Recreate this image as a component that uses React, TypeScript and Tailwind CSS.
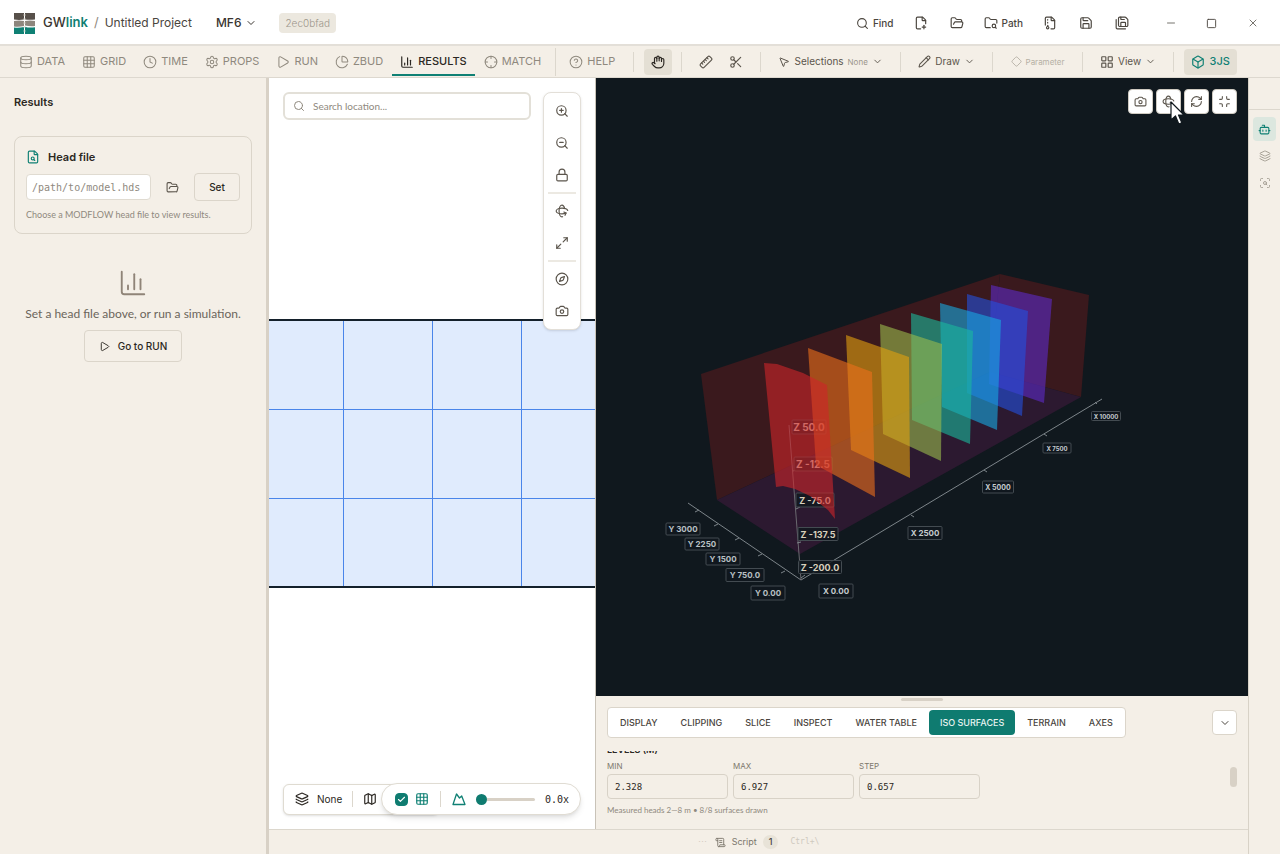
import type { ReactNode } from 'react'
import clsx from 'clsx'
import {
  BarChart3,
  Bot,
  Box,
  Camera,
  Check,
  ChevronDown,
  Clock,
  Compass,
  Crosshair,
  Database,
  Diamond,
  FileArchive,
  FileSearch,
  FolderOpen,
  FolderSearch,
  Grid3x3,
  Hand,
  HelpCircle,
  Layers,
  LayoutGrid,
  Lock,
  Map as MapIcon,
  Maximize2,
  Minimize,
  Minus,
  MousePointer2,
  Pencil,
  PieChart,
  Play,
  RefreshCw,
  Rotate3d,
  Ruler,
  Save,
  SaveAll,
  ScanSearch,
  Scissors,
  ScrollText,
  Search,
  Settings,
  Square,
  X,
  ZoomIn,
  ZoomOut,
  type LucideIcon,
} from 'lucide-react'

interface NavItem {
  label: string
  icon: LucideIcon
}

const navItems: NavItem[] = [
  { label: 'DATA', icon: Database },
  { label: 'GRID', icon: Grid3x3 },
  { label: 'TIME', icon: Clock },
  { label: 'PROPS', icon: Settings },
  { label: 'RUN', icon: Play },
  { label: 'ZBUD', icon: PieChart },
  { label: 'RESULTS', icon: BarChart3 },
  { label: 'MATCH', icon: Crosshair },
]

const tabs = ['DISPLAY', 'CLIPPING', 'SLICE', 'INSPECT', 'WATER TABLE', 'ISO SURFACES', 'TERRAIN', 'AXES']

// Iso surfaces, far to near
const surfaces = [
  { fill: '#5d2ac8', points: '991,285 1052,299 1044,403 989,384' },
  { fill: '#2350df', points: '967,294 1028,311 1022,416 967,393' },
  { fill: '#17a8e1', points: '940,303 1001,320 997,430 942,407' },
  { fill: '#1bb99d', points: '911,313 973,331 970,444 912,420' },
  { fill: '#9bbb4d', points: '880,324 942,344 941,461 883,434' },
  { fill: '#e3a00f', points: '846,335 909,357 910,478 851,450' },
  { fill: '#ec701a', points: '808,348 872,372 875,497 816,465' },
  { fill: '#cf252a', points: '764,363 777,364 803,373 827,385 835,519 828,510 810,496 795,489 783,486 776,487' },
]

interface AxisLabelProps {
  text: string
  x: number
  y: number
  w: number
  h: number
  size: number
  color: string
}

const zLabels: AxisLabelProps[] = [
  { text: 'Z 50.0', x: 809, y: 427, w: 34, h: 14, size: 10, color: '#d8d0bd' },
  { text: 'Z -12.5', x: 813, y: 464, w: 38, h: 14, size: 10, color: '#d8d0bd' },
  { text: 'Z -75.0', x: 815, y: 500, w: 38, h: 14, size: 9, color: '#d8d0bd' },
  { text: 'Z -137.5', x: 818, y: 534, w: 40, h: 13, size: 9, color: '#d8d0bd' },
  { text: 'Z -200.0', x: 820, y: 567, w: 43, h: 13, size: 9, color: '#d8d0bd' },
]

const floorLabels: AxisLabelProps[] = [
  { text: 'Y 3000', x: 683, y: 529, w: 34, h: 12, size: 8, color: '#b9c0c4' },
  { text: 'Y 2250', x: 702, y: 544, w: 34, h: 12, size: 8, color: '#b9c0c4' },
  { text: 'Y 1500', x: 723, y: 559, w: 34, h: 12, size: 8, color: '#b9c0c4' },
  { text: 'Y 750.0', x: 745, y: 575, w: 38, h: 13, size: 8, color: '#b9c0c4' },
  { text: 'Y 0.00', x: 768, y: 593, w: 34, h: 14, size: 8, color: '#b9c0c4' },
  { text: 'X 0.00', x: 836, y: 591, w: 34, h: 14, size: 8, color: '#c5cbce' },
  { text: 'X 2500', x: 925, y: 533, w: 34, h: 13, size: 8, color: '#c5cbce' },
  { text: 'X 5000', x: 998, y: 487, w: 31, h: 12, size: 7, color: '#c5cbce' },
  { text: 'X 7500', x: 1057, y: 448, w: 28, h: 10, size: 6, color: '#c5cbce' },
  { text: 'X 10000', x: 1106, y: 416, w: 29, h: 9, size: 6, color: '#c5cbce' },
]

function AxisLabel({ text, x, y, w, h, size, color }: AxisLabelProps) {
  return (
    <g>
      <rect x={x - w / 2} y={y - h / 2} width={w} height={h} rx="1" fill="#10181e" fillOpacity="0.8" stroke="#434b51" />
      <text x={x} y={y} fontSize={size} fontWeight="700" fill={color} textAnchor="middle" dominantBaseline="central">
        {text}
      </text>
    </g>
  )
}

function Scene() {
  return (
    <svg viewBox="596 78 652 618" className="block h-full w-full" role="img" aria-label="Iso surfaces">
      <polygon points="701,374 1000,274 990,372 717,500" fill="#3a191d" />
      <polygon points="1000,274 1089,295 1081,397 990,372" fill="#3a191d" />
      <polygon points="717,500 990,372 1081,397 800,554" fill="#2c1930" />
      <g stroke="#7d858a" strokeWidth="1" fill="none">
        <path d="M688 503 801 580 1102 399" />
        <path d="M801 580 789 425" stroke="#6b6a70" />
        <path d="M695 512l4-2M714 526l4-2M735 540l4-2M758 556l4-2M781 573l4-2M801 578l4-3" />
        <path d="M911 515l3 2M984 470l3 2M1044 434l3 2M1095 402l2 2" />
        <path d="M796 509l4-2M797 543l4-1M793 471l3-1" />
      </g>
      {zLabels.map((label) => (
        <AxisLabel key={label.text} {...label} />
      ))}
      {surfaces.map((surface) => (
        <polygon key={surface.fill} points={surface.points} fill={surface.fill} fillOpacity="0.6" />
      ))}
      {floorLabels.map((label) => (
        <AxisLabel key={label.text} {...label} />
      ))}
    </svg>
  )
}

function MapGrid() {
  return (
    <svg viewBox="269 78 326 751" preserveAspectRatio="xMidYMid slice" className="block h-full w-full" aria-hidden="true">
      <rect x="0" y="320" width="900" height="267" fill="#e0ebfd" />
      <path
        d="M0 409H900M0 498H900M343.5 320V587M432.5 320V587M521.5 320V587"
        stroke="#4a85ea"
        strokeWidth="1"
        shapeRendering="crispEdges"
      />
      <path d="M0 320H900M0 587H900" stroke="#14202b" strokeWidth="2" />
    </svg>
  )
}

function Logo() {
  return (
    <svg width="21" height="21" viewBox="0 0 21 21" className="shrink-0" aria-hidden="true">
      <path d="M0 0h10v6.500q-5 .8-10 0z" fill="#57504a" />
      <path d="M11 0h10v6.500q-5 .6-10 0z" fill="#57504a" />
      <path d="M0 8q5-.8 10 0v5q-5 1-10 .4z" fill="#8d867d" />
      <path d="M11 8q5-.8 10 0v5q-5 .6-10-.6z" fill="#8d867d" />
      <path d="M0 14.500q5 .6 10-.5V21H0z" fill="#0f8074" />
      <path d="M11 13.700q4 1.400 10 .6V21H11z" fill="#0f8074" />
      <path d="M10.500 1v20" stroke="#e6e2da" strokeWidth="1.500" strokeDasharray="2 2" />
    </svg>
  )
}

function FilePlusIcon() {
  return (
    <svg width="14" height="14" viewBox="0 0 24 24" fill="none" stroke="currentColor" strokeWidth="2" strokeLinecap="round" strokeLinejoin="round" aria-hidden="true">
      <path d="M11.350 22H6a2 2 0 0 1-2-2V4a2 2 0 0 1 2-2h8a2.400 2.400 0 0 1 1.706.706l3.588 3.588A2.400 2.400 0 0 1 20 8v5.350" />
      <path d="M14 2v5a1 1 0 0 0 1 1h5" />
      <path d="M14 19h6" />
      <path d="M17 16v6" />
    </svg>
  )
}

function TerrainIcon() {
  return (
    <svg width="14" height="14" viewBox="0 0 14 14" fill="none" stroke="currentColor" strokeWidth="1.300" strokeLinejoin="round" className="shrink-0" aria-hidden="true">
      <path d="M1 12.500 4.500 2l3 4 2.200-2L13 12.500z" />
    </svg>
  )
}

function IconButton({ label, className, children }: { label: string; className?: string; children: ReactNode }) {
  return (
    <button type="button" aria-label={label} className={clsx('flex shrink-0 items-center justify-center', className)}>
      {children}
    </button>
  )
}

function Header() {
  return (
    <header className="flex h-[46px] shrink-0 items-center border-b-2 border-[#e3dfd8] bg-white pt-[2px] pr-[7px] pl-[14px] text-[#4a453e]">
      <Logo />
      <div className="ml-2 flex items-center text-[12px]">
        <span className="text-[13px] font-medium text-[#3a352f]">
          GW<span className="font-semibold text-[#0f8074]">link</span>
        </span>
        <span className="mx-[6px] text-[13px] text-[#8f897e]">/</span>
        <span>Untitled Project</span>
      </div>
      <button type="button" className="ml-6 flex items-center gap-1 text-[12px] font-medium text-[#3a352f]">
        MF6
        <ChevronDown size={12} />
      </button>
      <span className="ml-[22px] rounded-sm bg-[#ece8df] px-[6px] py-[2px] text-[10px] leading-[16px] font-light text-[#9c968b]">2ec0bfad</span>

      <div className="ml-auto flex items-center text-[10px]">
        <button type="button" className="flex items-center gap-1 px-[9px] font-medium">
          <Search size={13} />
          Find
        </button>
        <IconButton label="New file" className="h-8 w-9"><FilePlusIcon /></IconButton>
        <IconButton label="Open folder" className="h-8 w-9"><FolderOpen size={14} /></IconButton>
        <button type="button" className="flex items-center gap-1 px-[9px] font-medium">
          <FolderSearch size={14} />
          Path
        </button>
        <IconButton label="Archive" className="h-8 w-9"><FileArchive size={14} /></IconButton>
        <IconButton label="Save" className="h-8 w-9"><Save size={14} /></IconButton>
        <IconButton label="Save all" className="h-8 w-9"><SaveAll size={14} /></IconButton>
        <div className="ml-[10px] flex">
          <IconButton label="Minimize" className="h-8 w-[41px]"><Minus size={12} strokeWidth={1.5} /></IconButton>
          <IconButton label="Maximize" className="h-8 w-[41px]"><Square size={11} /></IconButton>
          <IconButton label="Close" className="h-8 w-[41px]"><X size={12} strokeWidth={1.5} /></IconButton>
        </div>
      </div>
    </header>
  )
}

function Separator() {
  return <span className="h-5 w-px shrink-0 bg-[#dcd7cd]" />
}

function NavBar() {
  return (
    <nav className="flex h-8 shrink-0 items-center border-b border-[#ddd8cf] pr-[43px] pl-[11px] text-[#8f897e]">
      <div className="flex shrink-0 gap-px">
        {navItems.map(({ label, icon: Icon }) => {
          const active = label === 'RESULTS'
          return (
            <button
              key={label}
              type="button"
              className={clsx(
                'flex h-7 items-center gap-1 border-b-2 px-2 pt-[2px] text-[11px]',
                active ? 'border-[#0f8074] font-medium text-[#2b2722]' : 'border-transparent'
              )}
            >
              <Icon size={14} strokeWidth={active ? 2 : 1.75} />
              {label}
            </button>
          )
        })}
      </div>
      <span className="ml-[6px] h-7 w-px shrink-0 bg-[#dcd7cd]" />
      <button type="button" className="flex shrink-0 items-center gap-1 pl-[13px] text-[11px]">
        <HelpCircle size={14} strokeWidth={1.75} />
        HELP
      </button>

      {/* Tools */}
      <div className="ml-[18px] flex min-w-0 flex-1 items-center justify-between text-[10px] text-[#5b554c]">
        <Separator />
        <IconButton label="Pan" className="h-[26px] w-7 rounded bg-[#e4dfd4] text-[#2b2722]"><Hand size={14} /></IconButton>
        <Separator />
        <div className="flex items-center">
          <IconButton label="Measure" className="h-6 w-[30px]"><Ruler size={14} className="-scale-x-100" /></IconButton>
          <IconButton label="Cut" className="h-6 w-[30px]"><Scissors size={14} /></IconButton>
        </div>
        <Separator />
        <button type="button" className="flex items-center gap-1 px-2">
          <MousePointer2 size={12} />
          Selections <span className="text-[8px] text-[#9c968b]">None</span>
          <ChevronDown size={11} />
        </button>
        <Separator />
        <button type="button" className="flex items-center gap-1 px-2">
          <Pencil size={13} />
          Draw
          <ChevronDown size={11} />
        </button>
        <Separator />
        <button type="button" disabled className="flex items-center gap-1 px-2 text-[8px] text-[#b5afa4]">
          <Diamond size={11} />
          Parameter
        </button>
        <Separator />
        <button type="button" className="flex items-center gap-1 px-2">
          <LayoutGrid size={14} />
          View
          <ChevronDown size={11} />
        </button>
        <Separator />
        <button type="button" className="flex h-[26px] items-center gap-[5px] rounded bg-[#e4dfd4] px-[7px] text-[11px] font-medium text-[#0f8074]">
          <Box size={14} />
          3JS
        </button>
      </div>
    </nav>
  )
}

function ResultsPanel() {
  return (
    <aside className="w-[269px] shrink-0 border-r-[3px] border-[#d8d1c6] px-[14px] text-[#2b2722]">
      <h1 className="pt-4 text-[11px] leading-4 font-semibold">Results</h1>
      <section className="mt-[26px] rounded-lg border border-[#dbd5ca] px-[11px] pt-3 pb-[11px]">
        <h2 className="flex items-center gap-2 text-[11px] leading-4 font-semibold">
          <FileSearch size={14} className="text-[#0f8074]" />
          Head file
        </h2>
        <div className="mt-2 flex items-center">
          <input
            aria-label="Head file path"
            placeholder="/path/to/model.hds"
            className="h-[26px] min-w-0 flex-1 rounded-sm border border-[#e0dbd1] bg-white px-[5px] font-['DejaVu_Sans_Mono',monospace] text-[10px] placeholder:text-[#8f897e]"
          />
          <IconButton label="Browse" className="h-7 w-[43px] text-[#5b554c]"><FolderOpen size={13} /></IconButton>
          <button type="button" className="h-7 w-[46px] rounded border border-[#dbd5ca] text-[10px] font-medium">Set</button>
        </div>
        <p className="mt-[7px] font-['Lato',sans-serif] text-[9px] leading-[14px] text-[#8f897e]">Choose a MODFLOW head file to view results.</p>
      </section>

      <div className="mt-[34px] flex flex-col items-center">
        <BarChart3 size={30} strokeWidth={1.5} className="text-[#8f8478]" />
        <p className="mt-2 font-['Lato',sans-serif] text-[12px] leading-4 whitespace-nowrap text-[#6b655b]">Set a head file above, or run a simulation.</p>
        <button type="button" className="mt-2 flex h-8 items-center gap-2 rounded border border-[#dbd5ca] px-[14px] text-[10px] font-medium">
          <Play size={11} />
          Go to RUN
        </button>
      </div>
    </aside>
  )
}

function MapView() {
  return (
    <section className="relative min-w-0 flex-1 overflow-hidden bg-white">
      <div className="absolute inset-0">
        <MapGrid />
      </div>
      <div className="absolute inset-x-[14px] top-[14px] flex items-start gap-3 text-[#5b554c]">
        <label className="flex h-7 min-w-0 flex-1 items-center gap-2 rounded-md border-2 border-[#e3e0d8] bg-white px-2">
          <Search size={12} className="shrink-0 text-[#8f897e]" />
          <input
            aria-label="Search location"
            placeholder="Search location..."
            className="w-full min-w-0 font-['Lato',sans-serif] text-[10px] outline-none placeholder:text-[#8f897e]"
          />
        </label>
        <div className="flex w-[38px] flex-col items-center rounded-lg border border-[#e3dfd8] bg-white py-[2px] shadow-sm">
          <IconButton label="Zoom in" className="h-8 w-8"><ZoomIn size={14} /></IconButton>
          <IconButton label="Zoom out" className="h-8 w-8"><ZoomOut size={14} /></IconButton>
          <IconButton label="Lock" className="h-8 w-8"><Lock size={14} /></IconButton>
          <span className="my-px h-[2px] w-7 bg-[#ece9e2]" />
          <IconButton label="Rotate" className="h-8 w-8"><Rotate3d size={14} /></IconButton>
          <IconButton label="Fit" className="h-8 w-8"><Maximize2 size={14} /></IconButton>
          <span className="my-px h-[2px] w-7 bg-[#ece9e2]" />
          <IconButton label="Compass" className="h-8 w-8"><Compass size={14} /></IconButton>
          <IconButton label="Snapshot" className="h-8 w-8"><Camera size={14} /></IconButton>
        </div>
      </div>

      <div className="absolute inset-x-[14px] bottom-[14px] flex items-center">
        <div className="flex h-[31px] w-[156px] shrink-0 items-center rounded-md border border-[#dfdbd1] bg-white pl-[11px] text-[10px] text-[#2b2722] shadow-sm">
          <button type="button" className="flex items-center gap-2">
            <Layers size={14} />
            None
          </button>
          <span className="mx-[10px] h-4 w-px bg-[#dcd7cd]" />
          <IconButton label="Basemap"><MapIcon size={14} /></IconButton>
        </div>
        <div className="relative -ml-[58px] flex h-8 min-w-0 flex-1 items-center rounded-full border border-[#e0dcd3] bg-white pr-[11px] pl-[13px] text-[#0f8074] shadow-md">
          <label className="relative flex h-[13px] w-[13px] shrink-0">
            <input type="checkbox" defaultChecked aria-label="Show grid" className="h-[13px] w-[13px] appearance-none rounded-sm border border-[#0f8074] bg-white checked:bg-[#0f7b70]" />
            <Check size={9} strokeWidth={3} className="pointer-events-none absolute top-[2px] left-[2px] text-white" />
          </label>
          <Grid3x3 size={14} className="ml-[7px] shrink-0" />
          <span className="mx-[11px] h-4 w-px shrink-0 bg-[#dcd7cd]" />
          <TerrainIcon />
          <input
            type="range"
            aria-label="Vertical exaggeration"
            defaultValue={0}
            className="ml-[10px] h-3 min-w-0 flex-1 appearance-none bg-transparent [&::-webkit-slider-runnable-track]:h-[3px] [&::-webkit-slider-runnable-track]:rounded-full [&::-webkit-slider-runnable-track]:bg-[#d8d1c6] [&::-webkit-slider-thumb]:-mt-1 [&::-webkit-slider-thumb]:h-[11px] [&::-webkit-slider-thumb]:w-[11px] [&::-webkit-slider-thumb]:appearance-none [&::-webkit-slider-thumb]:rounded-full [&::-webkit-slider-thumb]:bg-[#0f7b70]"
          />
          <span className="ml-[10px] font-['DejaVu_Sans_Mono',monospace] text-[10px] text-[#2b2722]">0.0x</span>
        </div>
      </div>
    </section>
  )
}

function LevelField({ label, value }: { label: string; value: string }) {
  return (
    <label className="flex w-[121px] flex-col text-[8px] leading-[10px] text-[#7d776c]">
      {label}
      <input
        defaultValue={value}
        className="mt-[3px] h-[25px] rounded-sm border border-[#d8d2c7] px-[7px] font-['DejaVu_Sans_Mono',monospace] text-[9px] text-[#2b2722]"
      />
    </label>
  )
}

function SceneView() {
  return (
    <section className="flex min-w-0 flex-[2] flex-col border-l border-[#c9c3b8]">
      <div className="relative min-h-0 flex-1 overflow-hidden bg-[#10181e]">
        <Scene />
        <div className="absolute top-[11px] right-[11px] flex gap-[3px] text-[#5b554c]">
          <IconButton label="Snapshot" className="h-[25px] w-[25px] rounded border border-[#cfcac1] bg-white"><Camera size={13} /></IconButton>
          <IconButton label="Rotate" className="h-[25px] w-[25px] rounded border border-[#cfcac1] bg-white"><Rotate3d size={13} /></IconButton>
          <IconButton label="Reset" className="h-[25px] w-[25px] rounded border border-[#cfcac1] bg-white"><RefreshCw size={13} /></IconButton>
          <IconButton label="Exit fullscreen" className="h-[25px] w-[25px] rounded border border-[#cfcac1] bg-white"><Minimize size={13} /></IconButton>
        </div>
        {/* Pointer */}
        <svg width="15" height="24" viewBox="0 0 15 24" className="absolute top-[23px] right-[63px]" aria-hidden="true">
          <path d="M1 1v18l4.500-4 3.300 8 3-1.300-3.300-7.700H14z" fill="#fff" stroke="#10181e" strokeWidth="1.200" strokeLinejoin="round" />
        </svg>
      </div>

      <div className="h-[133px] shrink-0 px-[11px]">
        <div className="flex h-[11px] justify-center pt-[2px]">
          <span className="h-[3px] w-[42px] rounded-full bg-[#d8d1c6]" />
        </div>
        <div className="flex items-center justify-between">
          <div role="tablist" className="flex h-[31px] items-center gap-px rounded-sm border border-[#dbd5ca] bg-white px-px text-[9px] font-medium">
            {tabs.map((tab) => (
              <button
                key={tab}
                type="button"
                role="tab"
                aria-selected={tab === 'ISO SURFACES'}
                className={clsx(
                  'h-[25px] rounded px-[11px] whitespace-nowrap',
                  tab === 'ISO SURFACES' ? 'bg-[#0f7b70] text-[#e8f3f1]' : 'text-[#4a453e]'
                )}
              >
                {tab}
              </button>
            ))}
          </div>
          <IconButton label="Collapse" className="h-[25px] w-[25px] rounded-sm border border-[#dbd5ca] bg-white text-[#4a453e]">
            <ChevronDown size={12} />
          </IconButton>
        </div>
        {/* Scrolled settings */}
        <div className="mt-[13px] flex h-[70px] items-start justify-between overflow-hidden">
          <div className="-mt-[6px]">
            <h3 className="text-[9px] leading-[10px] font-semibold text-[#2b2722]">LEVELS (M)</h3>
            <div className="mt-[6px] flex gap-[5px]">
              <LevelField label="MIN" value="2.328" />
              <LevelField label="MAX" value="6.927" />
              <LevelField label="STEP" value="0.657" />
            </div>
            <p className="mt-[5px] font-['Lato',sans-serif] text-[8px] leading-3 text-[#8f897e]">Measured heads 2—8 m • 8/8 surfaces drawn</p>
          </div>
          <span className="mt-4 h-5 w-[7px] rounded-sm bg-[#d8d1c6]" />
        </div>
      </div>
    </section>
  )
}

function ScriptBar() {
  return (
    <footer className="flex h-[25px] shrink-0 items-center justify-center border-t border-[#dcd7cd] text-[9px] text-[#7d776c]">
      <span className="mr-2 text-[#d3cdc2]">⋯</span>
      <button type="button" className="flex items-center gap-[6px]">
        <ScrollText size={11} />
        Script
        <span className="rounded-full bg-[#e8e3d8] px-[6px] leading-[14px] font-medium text-[#4a453e]">1</span>
      </button>
      <span className="ml-3 font-['DejaVu_Sans_Mono',monospace] text-[8px] text-[#cfc9be]">Ctrl+\</span>
    </footer>
  )
}

function SideRail() {
  return (
    <aside className="flex w-8 shrink-0 flex-col items-center border-l border-[#d8d2c7] text-[#a8a297]">
      <span className="h-8 w-full border-b border-[#dcd7cd]" />
      <IconButton label="Assistant" className="mt-[7px] h-6 w-[23px] rounded bg-[#dce7df] text-[#0f8074]"><Bot size={13} /></IconButton>
      <IconButton label="Layers" className="mt-[2px] h-[25px] w-[23px]"><Layers size={12} /></IconButton>
      <IconButton label="Inspect" className="mt-[2px] h-[25px] w-[23px]"><ScanSearch size={12} /></IconButton>
    </aside>
  )
}

export default function App() {
  return (
    <div className="flex h-screen flex-col overflow-hidden bg-[#f4efe7] font-['Inter',sans-serif]">
      <Header />
      <NavBar />
      <main className="flex min-h-0 flex-1">
        <ResultsPanel />
        <div className="flex min-w-0 flex-1 flex-col">
          <div className="flex min-h-0 flex-1">
            <MapView />
            <SceneView />
          </div>
          <ScriptBar />
        </div>
        <SideRail />
      </main>
    </div>
  )
}
